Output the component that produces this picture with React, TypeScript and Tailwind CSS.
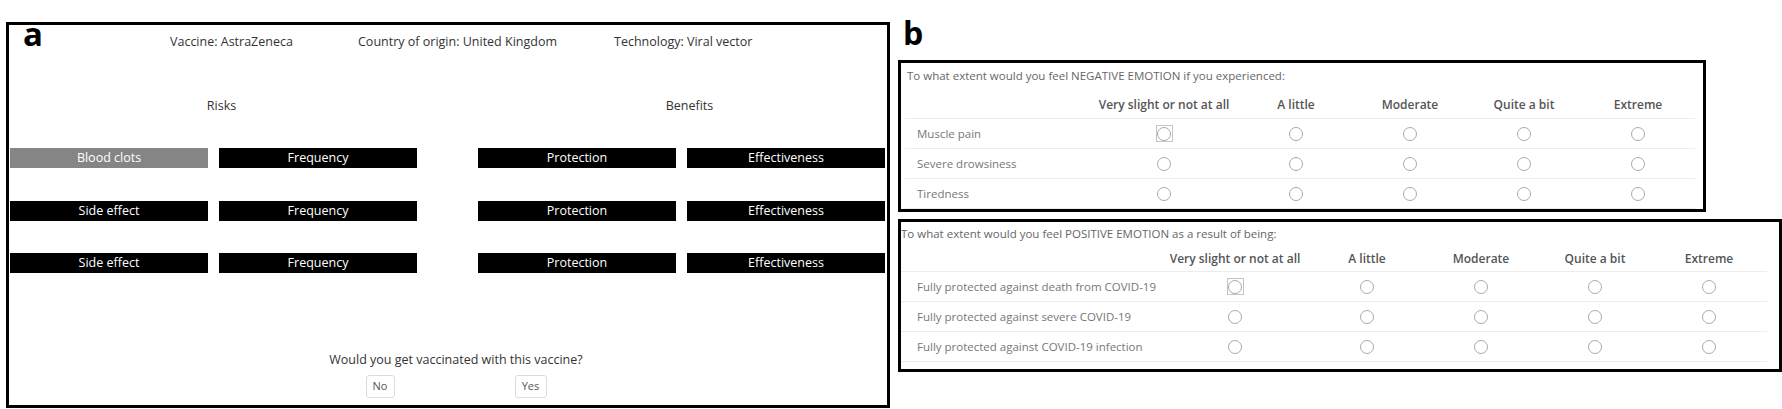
import clsx from "clsx";

const levels = ["Very slight or not at all", "A little", "Moderate", "Quite a bit", "Extreme"];

interface GroupProps {
  title: string;
  rows: [string, string][];
  className?: string;
}

const Bar = ({ label, muted }: { label: string; muted?: boolean }) => (
  <div
    className={clsx(
      "flex h-[20px] w-[198px] items-center justify-center text-[12.5px] text-white",
      muted ? "bg-[#858585]" : "bg-black"
    )}
  >
    {label}
  </div>
);

const Group = ({ title, rows, className }: GroupProps) => (
  <div className={clsx("flex flex-col", className)}>
    <div className="mt-[30px] flex h-[33px] items-center justify-center pl-[16px] text-[12.5px] text-[#333]">
      {title}
    </div>
    <div className="mt-[25px] flex gap-[11px]">
      <Bar label={rows[0][0]} muted={title === "Risks"} />
      <Bar label={rows[0][1]} />
    </div>
    <div className="mt-[33px] flex gap-[11px]">
      <Bar label={rows[1][0]} />
      <Bar label={rows[1][1]} />
    </div>
    <div className="mt-[32px] flex gap-[11px]">
      <Bar label={rows[2][0]} />
      <Bar label={rows[2][1]} />
    </div>
  </div>
);

const Radio = ({ focused }: { focused?: boolean }) => (
  <span
    className={clsx(
      "flex h-[17px] w-[17px] items-center justify-center",
      focused && "border border-[#c4c4c4]"
    )}
  >
    <span className="h-[14px] w-[14px] rounded-full border border-[#a9a9a9] bg-white" />
  </span>
);

interface ScaleProps {
  title: string;
  items: string[];
  wide?: boolean;
}

const Scale = ({ title, items, wide }: ScaleProps) => {
  const grid = wide
    ? "grid grid-cols-[259px_150px_114px_114px_114px_114px]"
    : "grid grid-cols-[184px_150px_114px_114px_114px_114px]";

  return (
    <div className={clsx("flex flex-col", wide ? "w-[866px]" : "ml-[4px] w-[790px]")}>
      <div
        className={clsx(
          "flex items-center text-[11.5px] text-[#666]",
          wide ? "h-[24px] pl-0" : "h-[26px] pl-[2px]"
        )}
      >
        {title}
      </div>
      <div
        className={clsx(
          grid,
          "items-center border-b border-[#ececec] text-[12px] font-semibold text-[#555]",
          wide ? "h-[26px]" : "h-[30px] pt-[3px]"
        )}
      >
        <span />
        {levels.map((l) => (
          <span key={l} className="text-center">
            {l}
          </span>
        ))}
      </div>
      {items.map((item, i) => (
        <div
          key={item}
          className={clsx(grid, "h-[30px] items-center border-b border-[#ececec] text-[11.5px] text-[#777]")}
        >
          <span className={wide ? "pl-[16px]" : "pl-[12px]"}>{item}</span>
          {levels.map((l, j) => (
            <span key={l} className="flex justify-center">
              <Radio focused={i === 0 && j === 0} />
            </span>
          ))}
        </div>
      ))}
    </div>
  );
};

export default function App() {
  return (
    <div className="flex h-[409px] w-[1782px] bg-white font-['Open_Sans',sans-serif]">
      <div className="relative ml-[6px] mt-[22px] h-[386px] w-[884px] border-[3px] border-black">
        <span className="absolute left-[14px] top-[-8px] text-[33px] font-bold leading-none text-black">a</span>
        <div className="flex h-[35px] items-center pl-[161px] text-[12.5px] text-[#333]">
          <span className="w-[188px]">Vaccine: AstraZeneca</span>
          <span className="w-[256px]">Country of origin: United Kingdom</span>
          <span>Technology: Viral vector</span>
        </div>
        <div className="flex pl-[1px]">
          <Group
            title="Risks"
            rows={[
              ["Blood clots", "Frequency"],
              ["Side effect", "Frequency"],
              ["Side effect", "Frequency"],
            ]}
          />
          <Group
            title="Benefits"
            className="ml-[61px]"
            rows={[
              ["Protection", "Effectiveness"],
              ["Protection", "Effectiveness"],
              ["Protection", "Effectiveness"],
            ]}
          />
        </div>
        <div className="mt-[79px] flex h-[17px] items-center justify-center pl-[16px] text-[12.5px] text-[#333]">
          Would you get vaccinated with this vaccine?
        </div>
        <div className="mt-[6px] flex justify-center gap-[120px] pl-[16px]">
          <button className="h-[23px] w-[29px] rounded-[3px] border border-[#dcdcdc] bg-white text-[11px] text-[#555]">
            No
          </button>
          <button className="h-[23px] w-[32px] rounded-[3px] border border-[#dcdcdc] bg-white text-[11px] text-[#555]">
            Yes
          </button>
        </div>
      </div>

      <div className="ml-[8px] flex flex-col">
        <div className="mt-[17px] h-[32px] pl-[5px] text-[32px] font-bold leading-none text-black">b</div>
        <div className="mt-[11px] h-[152px] w-[808px] border-[3px] border-black">
          <Scale
            title="To what extent would you feel NEGATIVE EMOTION if you experienced:"
            items={["Muscle pain", "Severe drowsiness", "Tiredness"]}
          />
        </div>
        <div className="mt-[7px] h-[153px] w-[884px] border-[3px] border-black">
          <Scale
            wide
            title="To what extent would you feel POSITIVE EMOTION as a result of being:"
            items={[
              "Fully protected against death from COVID-19",
              "Fully protected against severe COVID-19",
              "Fully protected against COVID-19 infection",
            ]}
          />
        </div>
      </div>
    </div>
  );
}
